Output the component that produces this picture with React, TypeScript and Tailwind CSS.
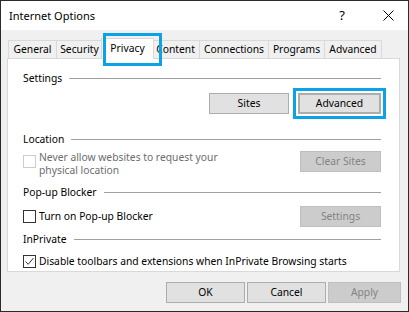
import React from 'react';

const TABS = [
  { label: 'General', w: 'w-[49px]' },
  { label: 'Security', w: 'w-[47px]' },
  { label: 'Privacy', w: 'w-[53px]', active: true },
  { label: 'Content', w: 'w-[49px]' },
  { label: 'Connections', w: 'w-[70px]' },
  { label: 'Programs', w: 'w-[57px]' },
  { label: 'Advanced', w: 'w-[58px]' },
];

function GroupLabel({ text }: { text: string }) {
  return (
    <div className="flex h-4 items-center gap-[7px]">
      <span className="text-black">{text}</span>
      <div className="h-px flex-1 bg-[#a0a0a0]" />
    </div>
  );
}

function Checkbox({ checked, disabled }: { checked?: boolean; disabled?: boolean }) {
  return (
    <span
      className={
        'flex h-[13px] w-[13px] shrink-0 items-center justify-center border bg-white ' +
        (disabled ? 'border-[#cccccc]' : 'border-[#333333]')
      }
    >
      {checked && (
        <svg width="11" height="11" viewBox="0 0 11 11" fill="none">
          <path d="M1.5 5.5 L4.2 8.3 L9.5 2" stroke="#333" strokeWidth="1" />
        </svg>
      )}
    </span>
  );
}

function Button({ children, disabled, className = '' }: { children: React.ReactNode; disabled?: boolean; className?: string }) {
  return (
    <div
      className={
        'flex items-center justify-center border ' +
        (disabled ? 'border-[#bfbfbf] bg-[#cccccc] text-[#838383] ' : 'border-[#adadad] bg-[#e1e1e1] text-black ') +
        className
      }
    >
      {children}
    </div>
  );
}

export default function App() {
  return (
    <div className="flex h-[312px] w-[409px] flex-col overflow-hidden border border-[#2b2b2b] bg-[#f0f0f0] font-['Noto_Sans',sans-serif] text-[10.3px] leading-none text-black">
      {/* title bar */}
      <div className="flex h-[29px] shrink-0 items-center bg-white pl-2 pr-[14px]">
        <span className="flex-1 text-[11px] text-black">Internet Options</span>
        <span className="mr-[38px] text-[13px]">?</span>
        <svg width="11" height="11" viewBox="0 0 11 11">
          <path d="M0.5 0.5 L10.5 10.5 M10.5 0.5 L0.5 10.5" stroke="#000" strokeWidth="1" />
        </svg>
      </div>

      {/* tabs */}
      <div className="relative mt-[10px] flex h-[18px] shrink-0 items-end pl-[7px]">
        {TABS.map((t) =>
          t.active ? (
            <div
              key={t.label}
              className={`relative z-10 -mx-[2px] -mb-px flex h-[21px] items-center justify-center border border-b-0 border-[#d9d9d9] bg-white pb-[1px] ${t.w}`}
            >
              {t.label}
            </div>
          ) : (
            <div
              key={t.label}
              className={`-ml-px flex h-[18px] items-center justify-center border border-b-0 border-[#d9d9d9] bg-[#f0f0f0] first:ml-0 ${t.w}`}
            >
              {t.label}
            </div>
          ),
        )}
        {/* highlight around Privacy tab */}
        <div className="absolute left-[102px] top-[-7px] z-20 h-[33px] w-[59px] border-[3px] border-[#0ba3e5]" />
      </div>

      {/* panel */}
      <div className="ml-[6px] mr-[8px] flex h-[214px] shrink-0 flex-col border border-[#d9d9d9] bg-white pl-[15px] pr-[18px] pt-[11px]">
        <GroupLabel text="Settings" />
        <div className="mt-[7px] flex h-[21px] justify-end gap-[9px]">
          <Button className="w-[80px]">Sites</Button>
          <div className="relative w-[83px]">
            <Button className="h-full w-full border-2 border-[#0078d7]">Advanced</Button>
            <div className="absolute -inset-[5px] border-[3px] border-[#0ba3e5]" />
          </div>
        </div>

        <div className="mt-[17px]">
          <GroupLabel text="Location" />
        </div>
        <div className="mt-[4px] flex h-[22px] items-start">
          <div className="mt-[4px]">
            <Checkbox disabled />
          </div>
          <div className="ml-[3px] flex-1 leading-[13px] text-[#6d6d6d]">
            Never allow websites to request your
            <br />
            physical location
          </div>
          <Button disabled className="h-[21px] w-[81px]">Clear Sites</Button>
        </div>

        <div className="mt-[11px]">
          <GroupLabel text="Pop-up Blocker" />
        </div>
        <div className="mt-[6px] flex h-[21px] items-center">
          <Checkbox />
          <span className="ml-[3px] flex-1">Turn on Pop-up Blocker</span>
          <Button disabled className="h-[21px] w-[81px]">Settings</Button>
        </div>

        <div className="mt-[4px]">
          <GroupLabel text="InPrivate" />
        </div>
        <div className="mt-[8px] flex h-[13px] items-center">
          <Checkbox checked />
          <span className="ml-[3px]">Disable toolbars and extensions when InPrivate Browsing starts</span>
        </div>
      </div>

      {/* bottom buttons */}
      <div className="mt-[10px] flex h-[21px] justify-end gap-[2px] pr-[7px]">
        <Button className="w-[79px]">OK</Button>
        <Button className="w-[79px]">Cancel</Button>
        <Button disabled className="w-[73px]">Apply</Button>
      </div>
    </div>
  );
}
